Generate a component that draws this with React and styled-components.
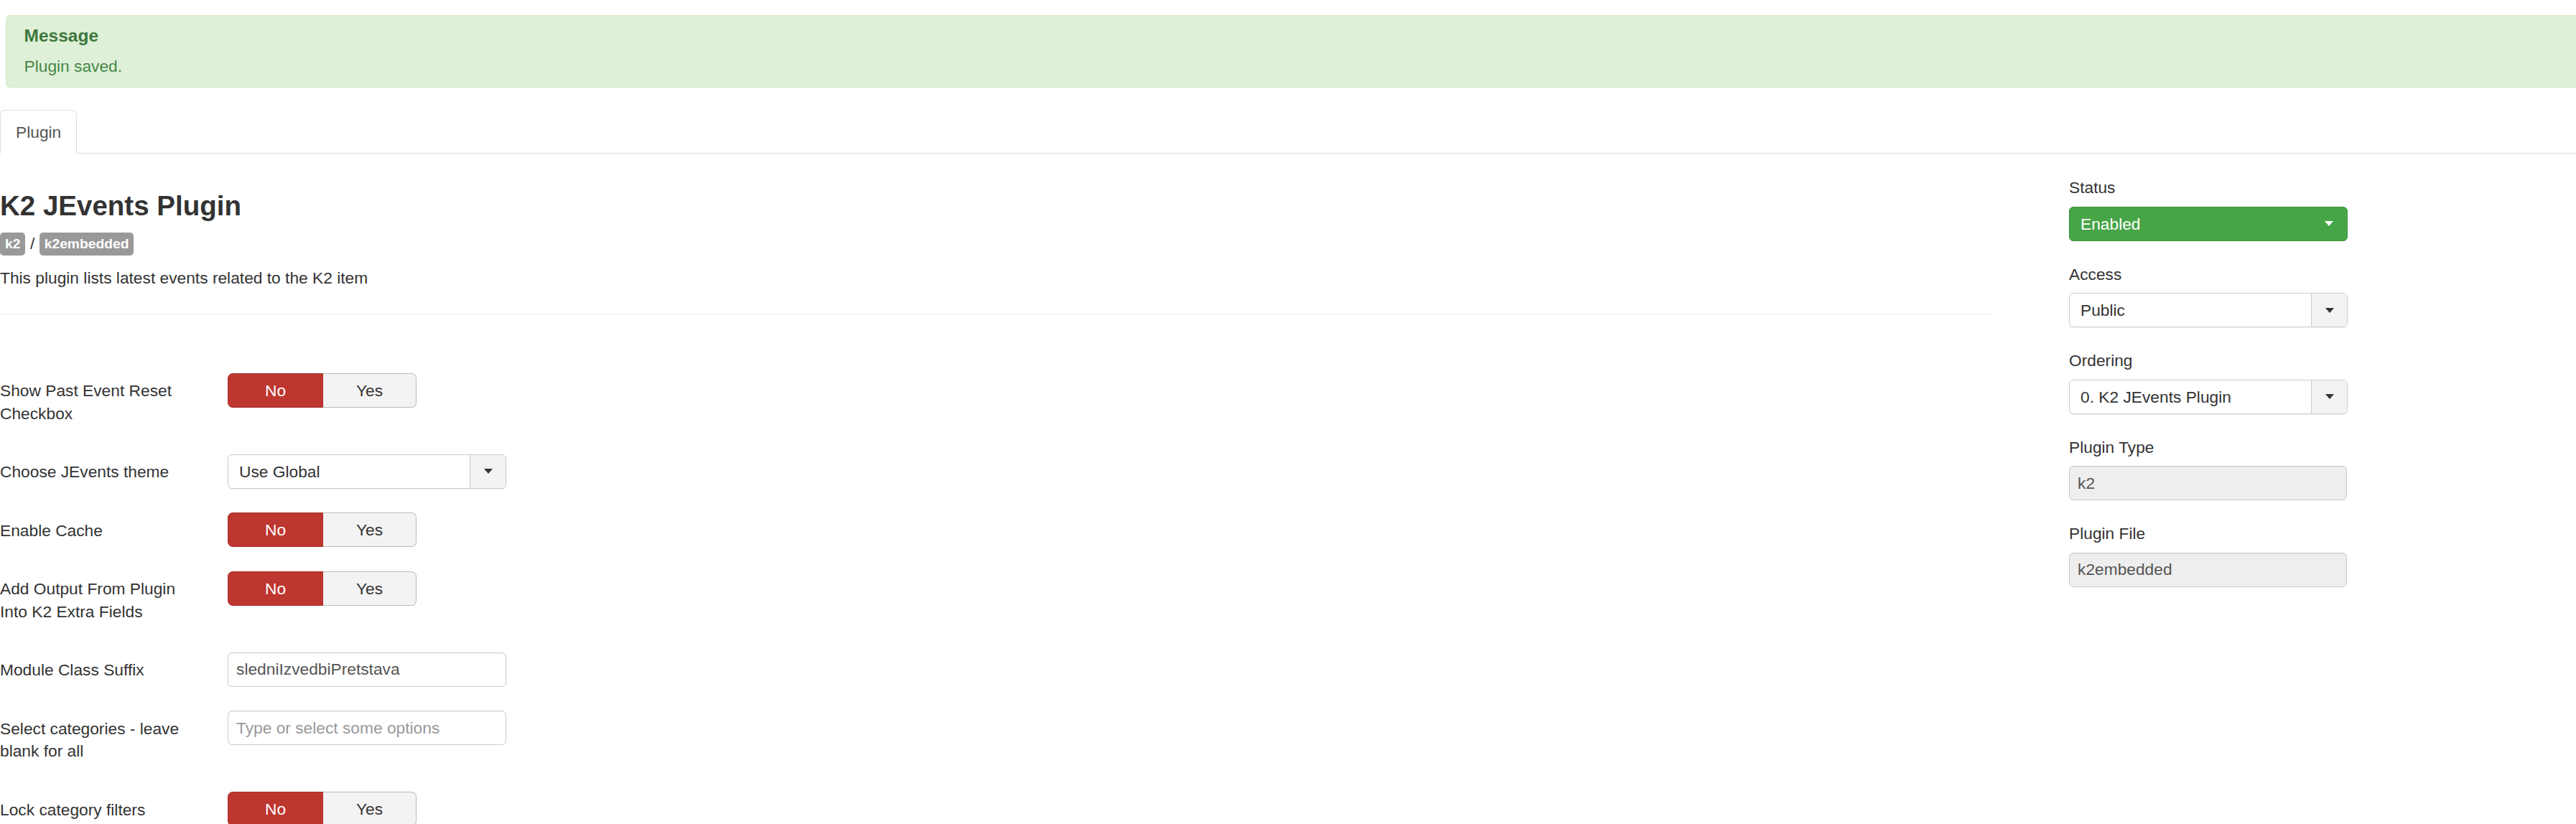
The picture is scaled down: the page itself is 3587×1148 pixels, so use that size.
import React from "react";
import styled, { createGlobalStyle } from "styled-components";

const GlobalStyle = createGlobalStyle`
  body {
    margin: 0;
    background: #fff;
    color: #333;
    font-family: "Liberation Sans", Arial, sans-serif;
    font-size: 22.75px;
    line-height: 31.5px;
  }
  * {
    box-sizing: border-box;
  }
`;

const params = [
  { label: "Show Past Event Reset Checkbox", type: "toggle" },
  { label: "Choose JEvents theme", type: "select", value: "Use Global" },
  { label: "Enable Cache", type: "toggle" },
  { label: "Add Output From Plugin Into K2 Extra Fields", type: "toggle" },
  { label: "Module Class Suffix", type: "text", value: "sledniIzvedbiPretstava" },
  {
    label: "Select categories - leave blank for all",
    type: "text",
    placeholder: "Type or select some options",
  },
  { label: "Lock category filters", type: "toggle" },
];

const Toggle = () => (
  <ToggleGroup>
    <ToggleButton $active>No</ToggleButton>
    <ToggleButton>Yes</ToggleButton>
  </ToggleGroup>
);

const Select = ({ value, $success }) => (
  <SelectBox $success={$success}>
    <SelectValue>{value}</SelectValue>
    <SelectButton $success={$success}>
      <Caret $light={$success} />
    </SelectButton>
  </SelectBox>
);

const Control = ({ field }) => {
  if (field.type === "toggle") return <Toggle />;
  if (field.type === "select") return <Select value={field.value} />;
  return (
    <TextInput
      type="text"
      readOnly
      defaultValue={field.value}
      placeholder={field.placeholder}
    />
  );
};

const App = () => {
  return (
    <>
      <GlobalStyle />
      <Alert>
        <AlertHeading>Message</AlertHeading>
        <AlertText>Plugin saved.</AlertText>
      </Alert>
      <TabBar>
        <Tab>Plugin</Tab>
      </TabBar>
      <Content>
        <Main>
          <Title>K2 JEvents Plugin</Title>
          <Badges>
            <Badge>k2</Badge>
            <span>/</span>
            <Badge>k2embedded</Badge>
          </Badges>
          <Description>This plugin lists latest events related to the K2 item</Description>
          <Divider />
          {params.map((field) => (
            <Row key={field.label}>
              <FieldLabel>{field.label}</FieldLabel>
              <Control field={field} />
            </Row>
          ))}
        </Main>
        <Sidebar>
          <Group>
            <SideLabel>Status</SideLabel>
            <Select value="Enabled" $success />
          </Group>
          <Group>
            <SideLabel>Access</SideLabel>
            <Select value="Public" />
          </Group>
          <Group>
            <SideLabel>Ordering</SideLabel>
            <Select value="0. K2 JEvents Plugin" />
          </Group>
          <Group>
            <SideLabel>Plugin Type</SideLabel>
            <TextInput type="text" readOnly defaultValue="k2" $disabled />
          </Group>
          <Group>
            <SideLabel>Plugin File</SideLabel>
            <TextInput type="text" readOnly defaultValue="k2embedded" $disabled />
          </Group>
        </Sidebar>
      </Content>
    </>
  );
};

const Alert = styled.div`
  margin: 21px 0 31px 8px;
  padding: 15.5px 24.5px 12.5px;
  background: #dff0d8;
  border: 1.75px solid #d6e9c6;
  border-right: 0;
  border-radius: 6px 0 0 6px;
  color: #468847;
`;

const AlertHeading = styled.h4`
  margin: 0 0 14.75px;
  font-size: 24.5px;
  line-height: 24.5px;
  font-weight: bold;
  color: #3c763d;
`;

const AlertText = styled.p`
  margin: 0;
`;

const TabBar = styled.ul`
  display: flex;
  margin: 0;
  padding: 0;
  list-style: none;
  border-bottom: 1px solid #ddd;
`;

const Tab = styled.li`
  margin-bottom: -1px;
  padding: 15px 21px 13px;
  border: 1px solid #ddd;
  border-bottom-color: #fff;
  border-radius: 7px 7px 0 0;
  background: #fff;
  color: #555;
`;

const Content = styled.div`
  display: grid;
  grid-template-columns: 2777px 388px;
  column-gap: 104px;
  padding-top: 32px;
`;

const Main = styled.div`
  display: flex;
  flex-direction: column;
`;

const Title = styled.h2`
  margin: 18px 0 13.5px;
  font-size: 38.5px;
  line-height: 46px;
  font-weight: bold;
  color: #333;
`;

const Badges = styled.div`
  display: flex;
  align-items: center;
  gap: 6.5px;
  height: 32px;
  margin-bottom: 16px;
`;

const Badge = styled.span`
  padding: 0 7px;
  border-radius: 5px;
  background: #999;
  color: #fff;
  font-size: 19.25px;
  font-weight: bold;
  line-height: 32px;
`;

const Description = styled.p`
  margin: 0 0 33.5px;
`;

const Divider = styled.hr`
  width: 100%;
  margin: 0 0 82px;
  border: 0;
  border-top: 1px solid #eee;
`;

const Row = styled.div`
  display: flex;
  align-items: flex-start;
  margin-bottom: 32.5px;
`;

const FieldLabel = styled.label`
  flex-shrink: 0;
  width: 280px;
  margin-right: 37px;
  padding: 9.5px 0 8px;
`;

const ToggleGroup = styled.div`
  display: inline-flex;
`;

const ToggleButton = styled.span`
  width: ${(p) => (p.$active ? "133px" : "130px")};
  height: 48px;
  border: 1px solid ${(p) => (p.$active ? "#a9302a" : "#bbb")};
  border-left-width: ${(p) => (p.$active ? "1px" : "0")};
  border-radius: ${(p) => (p.$active ? "7px 0 0 7px" : "0 7px 7px 0")};
  background: ${(p) => (p.$active ? "#bd362f" : "#f3f3f3")};
  color: ${(p) => (p.$active ? "#fff" : "#333")};
  line-height: 46px;
  text-align: center;
`;

const SelectBox = styled.div`
  display: flex;
  width: 388px;
  height: 48px;
  border: 1px solid ${(p) => (p.$success ? "#3f943f" : "#ccc")};
  border-radius: 6px;
  background: ${(p) => (p.$success ? "#46a546" : "#fff")};
  color: ${(p) => (p.$success ? "#fff" : "#333")};
  box-shadow: 0 1px 2px rgba(0, 0, 0, 0.06);
  overflow: hidden;
`;

const SelectValue = styled.span`
  flex: 1;
  padding-left: 15px;
  line-height: 46px;
  white-space: nowrap;
`;

const SelectButton = styled.span`
  display: flex;
  align-items: center;
  justify-content: center;
  width: 50px;
  border-left: ${(p) => (p.$success ? "0" : "1px solid #ccc")};
  background: ${(p) => (p.$success ? "transparent" : "#f3f3f3")};
`;

const Caret = styled.span`
  width: 0;
  height: 0;
  border-left: 6.5px solid transparent;
  border-right: 6.5px solid transparent;
  border-top: 7px solid ${(p) => (p.$light ? "#fff" : "#333")};
`;

const TextInput = styled.input`
  width: ${(p) => (p.$disabled ? "387px" : "388px")};
  height: 48px;
  padding: 0 11px;
  border: 1px solid #ccc;
  border-radius: 6px;
  background: ${(p) => (p.$disabled ? "#eee" : "#fff")};
  color: #555;
  font: inherit;
  line-height: 46px;
  outline: none;
  box-shadow: inset 0 1px 1px rgba(0, 0, 0, 0.05);

  &::placeholder {
    color: #999;
  }
`;

const Sidebar = styled.aside`
  display: flex;
  flex-direction: column;
`;

const Group = styled.div`
  margin-bottom: 31px;
`;

const SideLabel = styled.label`
  display: block;
  margin-bottom: 10px;
`;

export default App;
